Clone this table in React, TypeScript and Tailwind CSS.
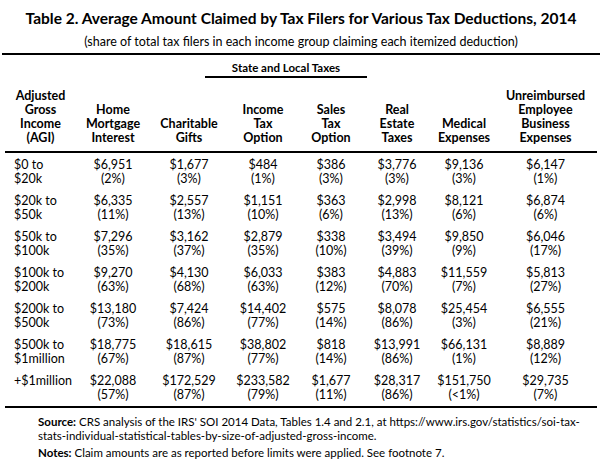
import React from "react";

const cols = "grid grid-cols-[71px_74px_78px_70px_66px_66px_68px_95px]";

const rows: { agi: [string, string]; vals: [string, string][] }[] = [
  { agi: ["$0 to", "$20k"], vals: [["$6,951", "(2%)"], ["$1,677", "(3%)"], ["$484", "(1%)"], ["$386", "(3%)"], ["$3,776", "(3%)"], ["$9,136", "(3%)"], ["$6,147", "(1%)"]] },
  { agi: ["$20k to", "$50k"], vals: [["$6,335", "(11%)"], ["$2,557", "(13%)"], ["$1,151", "(10%)"], ["$363", "(6%)"], ["$2,998", "(13%)"], ["$8,121", "(6%)"], ["$6,874", "(6%)"]] },
  { agi: ["$50k to", "$100k"], vals: [["$7,296", "(35%)"], ["$3,162", "(37%)"], ["$2,879", "(35%)"], ["$338", "(10%)"], ["$3,494", "(39%)"], ["$9,850", "(9%)"], ["$6,046", "(17%)"]] },
  { agi: ["$100k to", "$200k"], vals: [["$9,270", "(63%)"], ["$4,130", "(68%)"], ["$6,033", "(63%)"], ["$383", "(12%)"], ["$4,883", "(70%)"], ["$11,559", "(7%)"], ["$5,813", "(27%)"]] },
  { agi: ["$200k to", "$500k"], vals: [["$13,180", "(73%)"], ["$7,424", "(86%)"], ["$14,402", "(77%)"], ["$575", "(14%)"], ["$8,078", "(86%)"], ["$25,454", "(3%)"], ["$6,555", "(21%)"]] },
  { agi: ["$500k to", "$1million"], vals: [["$18,775", "(67%)"], ["$18,615", "(87%)"], ["$38,802", "(77%)"], ["$818", "(14%)"], ["$13,991", "(86%)"], ["$66,131", "(1%)"], ["$8,889", "(12%)"]] },
  { agi: ["+$1million", ""], vals: [["$22,088", "(57%)"], ["$172,529", "(87%)"], ["$233,582", "(79%)"], ["$1,677", "(11%)"], ["$28,317", "(86%)"], ["$151,750", "(<1%)"], ["$29,735", "(7%)"]] },
];

const headers: string[][] = [
  ["Adjusted", "Gross", "Income", "(AGI)"],
  ["Home", "Mortgage", "Interest"],
  ["Charitable", "Gifts"],
  ["Income", "Tax", "Option"],
  ["Sales", "Tax", "Option"],
  ["Real", "Estate", "Taxes"],
  ["Medical", "Expenses"],
  ["Unreimbursed", "Employee", "Business", "Expenses"],
];

export default function App() {
  return (
    <div className="w-[602px] h-[467px] bg-white text-black font-[Lato,'Liberation_Sans',sans-serif] overflow-hidden">
      <div className="pt-[8px] text-center text-[15.5px] leading-[20px] font-bold">
        Table 2. Average Amount Claimed by Tax Filers for Various Tax Deductions, 2014
      </div>
      <div className="mt-[6px] text-center text-[12.5px] leading-[16px]">
        (share of total tax filers in each income group claiming each itemized deduction)
      </div>
      <div className="mt-[3px] mx-[2px] border-b-2 border-black" />
      <div className="mt-[6px] flex">
        <div className="ml-[205px] w-[162px] border-b-2 border-black pb-[1px] text-center text-[11.5px] leading-[14px] font-bold">
          State and Local Taxes
        </div>
      </div>
      <div className="mx-[5px]">
        <div className={`${cols} mt-[11px] pb-[6px] border-b-2 border-black items-end text-center text-[12.5px] leading-[14px] font-bold`}>
          {headers.map((h, i) => (
            <div key={i} className="flex flex-col">
              {h.map((l) => (
                <span key={l}>{l}</span>
              ))}
            </div>
          ))}
        </div>
        <div className="pt-[5px] pb-[4px] border-b-2 border-black flex flex-col gap-[8px] text-[12.5px] leading-[14px]">
          {rows.map((r, i) => (
            <div key={i} className={cols}>
              <div className="flex flex-col pl-[9px] whitespace-nowrap">
                <span>{r.agi[0]}</span>
                <span>{r.agi[1] || "\u00a0"}</span>
              </div>
              {r.vals.map((v, j) => (
                <div key={j} className="flex flex-col text-center">
                  <span>{v[0]}</span>
                  <span>{v[1]}</span>
                </div>
              ))}
            </div>
          ))}
        </div>
      </div>
      <div className="pl-[38px] mt-[7px] text-[11.5px] leading-[14px]">
        <p>
          <span className="font-bold">Source:</span> CRS analysis of the IRS' SOI 2014 Data, Tables 1.4 and 2.1, at https://www.irs.gov/statistics/soi-tax-
          <br />
          stats-individual-statistical-tables-by-size-of-adjusted-gross-income.
        </p>
        <p className="mt-[3px]">
          <span className="font-bold">Notes:</span> Claim amounts are as reported before limits were applied. See footnote 7.
        </p>
      </div>
    </div>
  );
}
